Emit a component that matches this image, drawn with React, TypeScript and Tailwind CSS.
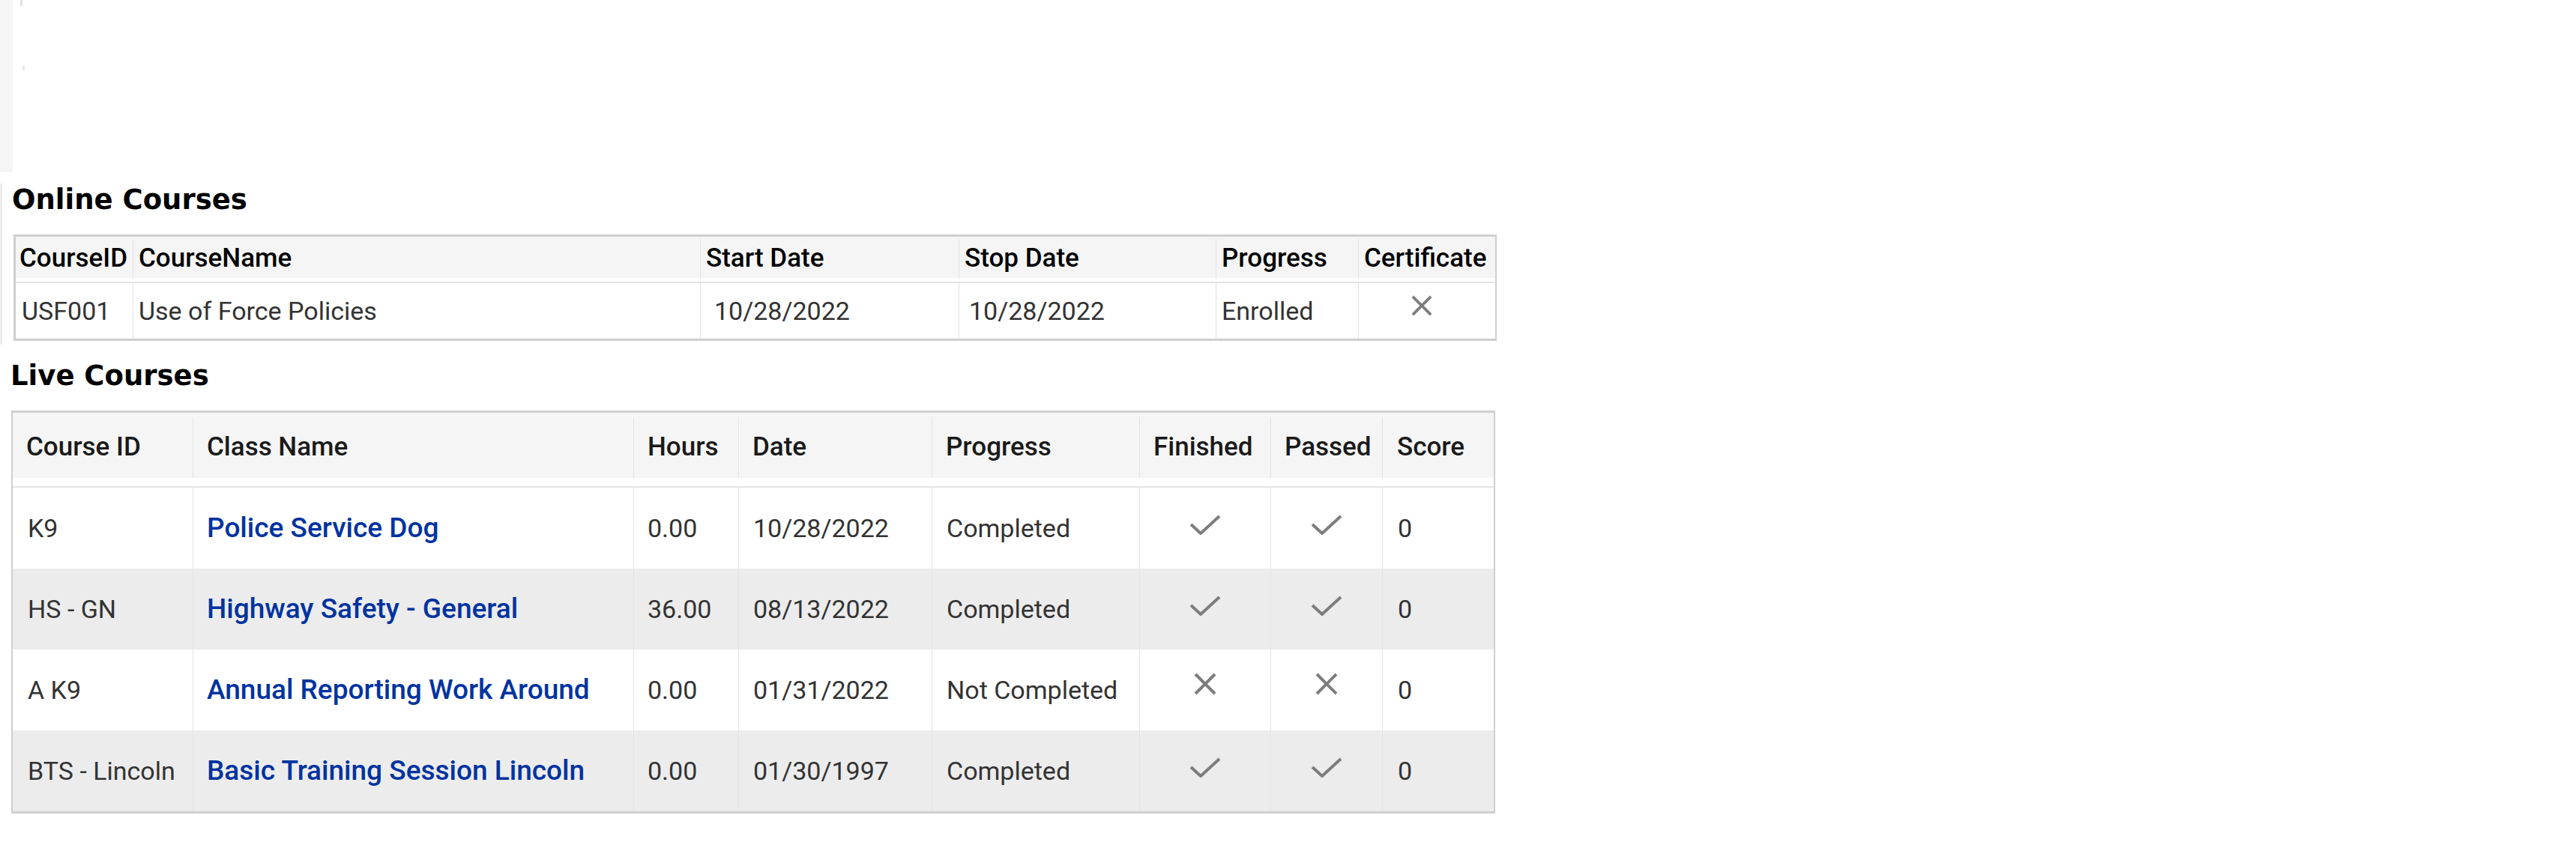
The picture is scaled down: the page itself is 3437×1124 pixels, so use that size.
import React from 'react';

interface LiveCourse {
  id: string;
  name: string;
  hours: string;
  date: string;
  progress: string;
  finished: boolean;
  passed: boolean;
  score: string;
}

const LIVE_COURSES: LiveCourse[] = [
  { id: 'K9', name: 'Police Service Dog', hours: '0.00', date: '10/28/2022', progress: 'Completed', finished: true, passed: true, score: '0' },
  { id: 'HS - GN', name: 'Highway Safety - General', hours: '36.00', date: '08/13/2022', progress: 'Completed', finished: true, passed: true, score: '0' },
  { id: 'A K9', name: 'Annual Reporting Work Around', hours: '0.00', date: '01/31/2022', progress: 'Not Completed', finished: false, passed: false, score: '0' },
  { id: 'BTS - Lincoln', name: 'Basic Training Session Lincoln', hours: '0.00', date: '01/30/1997', progress: 'Completed', finished: true, passed: true, score: '0' },
];

const LIVE_COLS = 'grid grid-cols-[240px_588px_140px_258px_277px_175px_149px_1fr]';
const ONLINE_COLS = 'grid grid-cols-[156px_757px_345px_343px_190px_1fr]';

function CheckMark() {
  return (
    <svg width="42" height="27" viewBox="0 0 42 27" className="mb-[10px]">
      <path d="M2 13 L15 25 L40 2" fill="none" stroke="#7d7d7d" strokeWidth="4" />
    </svg>
  );
}

function CrossMark({ size = 30, className = '' }: { size?: number; className?: string }) {
  return (
    <svg width={size} height={size} viewBox="0 0 30 30" className={className}>
      <path d="M2 2 L28 28 M28 2 L2 28" fill="none" stroke="#7d7d7d" strokeWidth="4" />
    </svg>
  );
}

export default function App() {
  return (
    <div className="min-h-screen bg-white font-['Roboto',sans-serif]">
      {/* Top strip */}
      <div className="flex h-[230px]">
        <div className="w-[17px] bg-[#f5f5f5]" />
        <div className="ml-[10px] flex flex-col">
          <div className="w-[3px] h-[8px] bg-[#e2e2e2]" />
          <div className="ml-[3px] mt-[80px] w-[3px] h-[6px] bg-[#e8e8e8]" />
        </div>
      </div>

      {/* Online Courses */}
      <section className="mt-[15px] pb-[5px] border-l-[3px] border-[#ececec]">
        <h2 className="pl-[13px] font-['DejaVu_Sans',sans-serif] font-bold text-[37px] leading-[44px] text-black">
          Online Courses
        </h2>
        <div className="ml-[15px] mt-[24px] w-[1979px] border-y-[3px] border-l-[3px] border-r-2 border-[#cfcfcf]">
          <div className={`${ONLINE_COLS} h-[55px] pt-[3px] bg-[#f5f5f5] text-[35px] font-medium text-black`}>
            <div className="flex items-center pl-[5px]">CourseID</div>
            <div className="flex items-center pl-[7px] border-l border-[#e2e2e2]">CourseName</div>
            <div className="flex items-center pl-[7px] border-l border-[#e2e2e2]">Start Date</div>
            <div className="flex items-center pl-[7px] border-l border-[#e2e2e2]">Stop Date</div>
            <div className="flex items-center pl-[7px] border-l border-[#e2e2e2]">Progress</div>
            <div className="flex items-center pl-[7px] border-l border-[#e2e2e2]">Certificate</div>
          </div>
          <div className="h-[5px]" />
          <div className="h-[2px] bg-[#e3e3e3]" />
          <div className={`${ONLINE_COLS} h-[74px] text-[34px] text-[#333]`}>
            <div className="flex items-center pl-[8px]">USF001</div>
            <div className="flex items-center pl-[7px] border-l border-[#e2e2e2]">Use of Force Policies</div>
            <div className="flex items-center pl-[18px] border-l border-[#e2e2e2]">10/28/2022</div>
            <div className="flex items-center pl-[13px] border-l border-[#e2e2e2]">10/28/2022</div>
            <div className="flex items-center pl-[7px] border-l border-[#e2e2e2]">Enrolled</div>
            <div className="flex items-center justify-center pr-[14px] border-l border-[#e2e2e2]">
              <CrossMark size={28} className="mb-[14px]" />
            </div>
          </div>
        </div>
      </section>

      {/* Live Courses */}
      <section className="mt-[20px]">
        <h2 className="pl-[14px] font-['DejaVu_Sans',sans-serif] font-bold text-[37px] leading-[44px] text-black">
          Live Courses
        </h2>
        <div className="ml-[15px] mt-[24px] w-[1980px] border-y-[3px] border-x-2 border-[#cfcfcf]">
          <div className={`${LIVE_COLS} h-[87px] pt-[6px] bg-[#f5f5f5] text-[35px] font-medium text-[#1a1a1a]`}>
            <div className="flex items-center pl-[18px]">Course ID</div>
            <div className="flex items-center pl-[18px] border-l border-[#e4e4e4]">Class Name</div>
            <div className="flex items-center pl-[18px] border-l border-[#e4e4e4]">Hours</div>
            <div className="flex items-center pl-[18px] border-l border-[#e4e4e4]">Date</div>
            <div className="flex items-center pl-[18px] border-l border-[#e4e4e4]">Progress</div>
            <div className="flex items-center pl-[18px] border-l border-[#e4e4e4]">Finished</div>
            <div className="flex items-center pl-[18px] border-l border-[#e4e4e4]">Passed</div>
            <div className="flex items-center pl-[19px] border-l border-[#e4e4e4]">Score</div>
          </div>
          <div className="h-[11px]" />
          <div className="h-[2px] bg-[#e3e3e3]" />
          {LIVE_COURSES.map((c, i) => (
            <div
              key={c.id}
              className={`${LIVE_COLS} h-[108px] text-[34px] text-[#333] ${i % 2 === 1 ? 'bg-[#ececec]' : 'bg-white'}`}
            >
              <div className="flex items-center pl-[20px] whitespace-nowrap">{c.id}</div>
              <div className="flex items-center pl-[18px] border-l border-[#e4e4e4] whitespace-nowrap">
                <a href="#" className="text-[37px] font-medium text-[#00339f]">{c.name}</a>
              </div>
              <div className="flex items-center pl-[18px] border-l border-[#e4e4e4]">{c.hours}</div>
              <div className="flex items-center pl-[19px] border-l border-[#e4e4e4]">{c.date}</div>
              <div className="flex items-center pl-[19px] border-l border-[#e4e4e4] whitespace-nowrap">{c.progress}</div>
              <div className="flex items-center justify-center border-l border-[#e4e4e4]">
                {c.finished ? <CheckMark /> : <CrossMark className="mb-[16px]" />}
              </div>
              <div className="flex items-center justify-center border-l border-[#e4e4e4]">
                {c.passed ? <CheckMark /> : <CrossMark className="mb-[16px]" />}
              </div>
              <div className="flex items-center pl-[20px] border-l border-[#e4e4e4]">{c.score}</div>
            </div>
          ))}
        </div>
      </section>
    </div>
  );
}
